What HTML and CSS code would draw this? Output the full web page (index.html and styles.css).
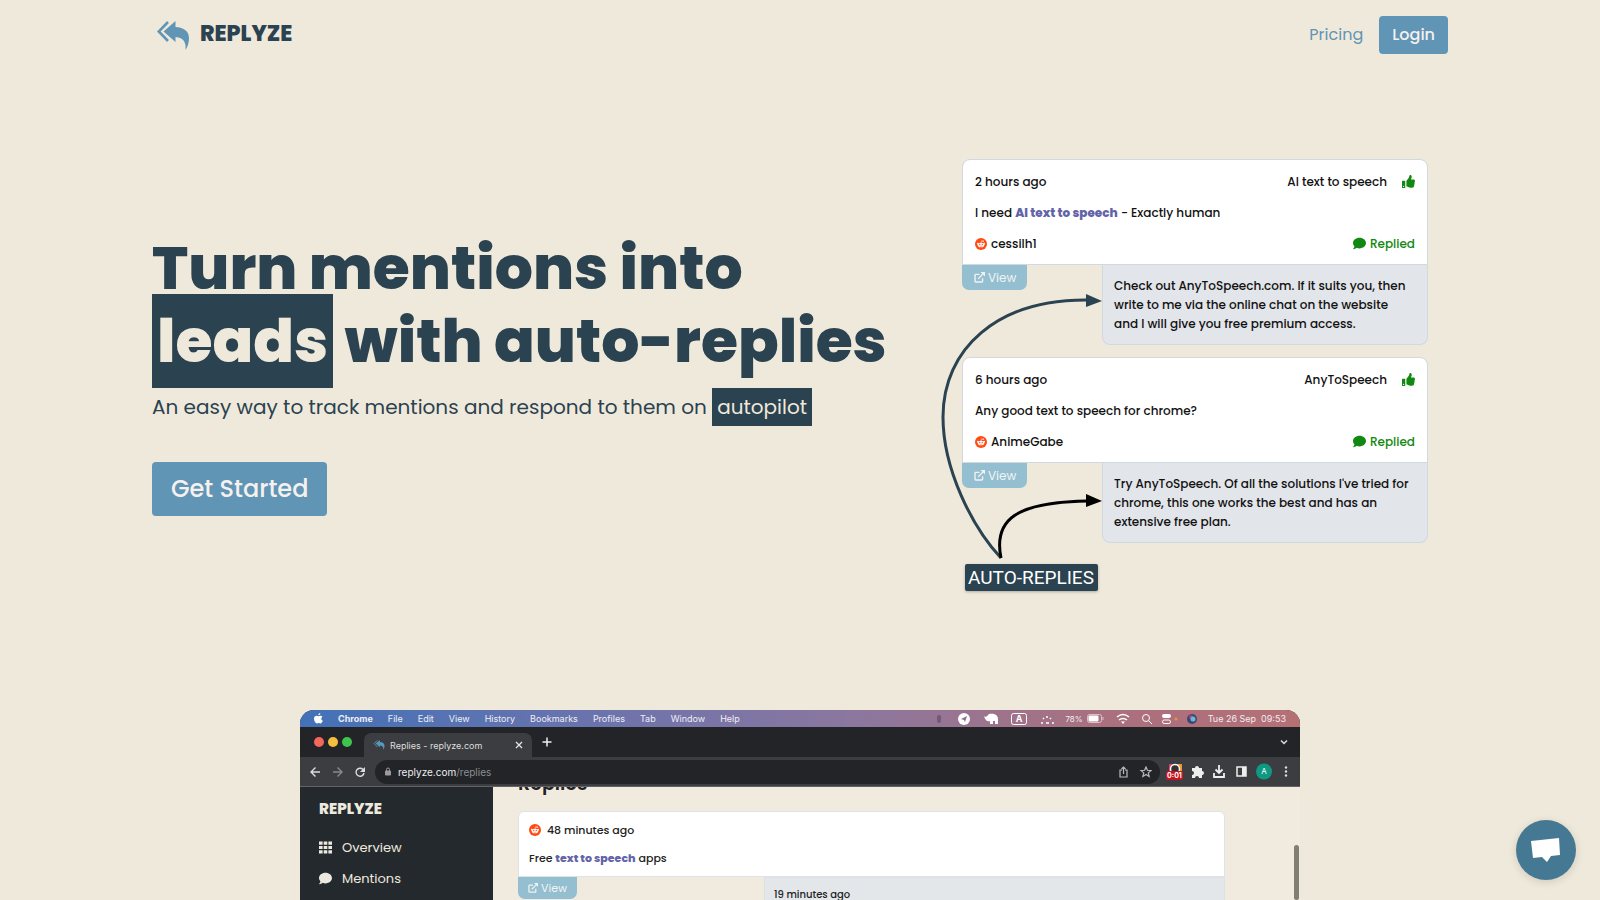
FILE: index.html
```html
<!DOCTYPE html>
<html lang="en">
<head>
<meta charset="utf-8">
<meta name="viewport" content="width=device-width, initial-scale=1">
<title>Replyze</title>
<link rel="stylesheet" href="styles.css">
</head>
<body>
<svg class="sprite" aria-hidden="true">
  <symbol id="logo" viewBox="0 0 32 29">
    <path d="M11 1 1.800 10.500 11 20" fill="none" stroke="currentColor" stroke-width="2.600"/>
    <path d="M18.500 0v6C27 6.500 32 10 32 17.500c0 4-1.500 8.500-3.500 11.500.8-7-1.500-12.500-10-13v5L6.500 10.500z" fill="currentColor"/>
  </symbol>
  <symbol id="thumb" viewBox="0 0 512 512"><path fill="currentColor" d="M104 224H24c-13 0-24 11-24 24v240c0 13 11 24 24 24h80c13 0 24-11 24-24V248c0-13-11-24-24-24zM64 472a24 24 0 1 1 0-48 24 24 0 0 1 0 48zM384 81c0 43-26 66-33 95h101c33 0 60 28 60 58 0 18-7 37-19 49 9 23 8 54-9 77 8 25 0 55-16 71 4 17 2 32-6 43-20 28-68 28-109 28h-3c-46 0-84-17-114-30-15-7-35-15-50-15-6 0-12-5-12-12V231c0-3 1-6 4-9 37-36 53-75 83-105 14-14 19-35 24-55C289 45 298 0 320 0c24 0 64 8 64 81z"/></symbol>
  <symbol id="comment" viewBox="0 0 512 448"><path fill="currentColor" d="M256 0C115 0 0 93 0 208c0 50 21 95 57 131-13 50-54 94-55 95-2 2-3 6-1 9s4 5 7 5c66 0 116-32 141-52 33 13 69 20 107 20 141 0 256-93 256-208S397 0 256 0z"/></symbol>
  <symbol id="external" viewBox="0 0 16 16"><path d="M8 3.500H2.500a1 1 0 0 0-1 1v9a1 1 0 0 0 1 1h9a1 1 0 0 0 1-1V9M6 10l7-7" fill="none" stroke="currentColor" stroke-width="2"/><path d="M9.500 0H16v6.500z" fill="currentColor"/></symbol>
  <symbol id="reddit" viewBox="0 0 24 24"><circle cx="12" cy="12" r="12" fill="#ff4a14"/><ellipse cx="12" cy="14" rx="6.500" ry="4.700" fill="#fff"/><circle cx="5.700" cy="11.500" r="1.800" fill="#fff"/><circle cx="18.300" cy="11.500" r="1.800" fill="#fff"/><path d="m12 10 1-4.500 3.500.8" stroke="#fff" fill="none"/><circle cx="16.500" cy="6.300" r="1.400" fill="#fff"/><circle cx="9.500" cy="13" r="1.300" fill="#ff4a14"/><circle cx="14.500" cy="13" r="1.300" fill="#ff4a14"/><path d="M9.500 16q2.500 1.500 5 0" stroke="#ff4a14" fill="none"/></symbol>
</svg>

<header class="header wrap">
  <a class="brand" href="#"><svg class="brand-icon"><use href="#logo"/></svg><span class="brand-name">REPLYZE</span></a>
  <nav class="nav"><a class="nav-link" href="#">Pricing</a><a class="btn" href="#">Login</a></nav>
</header>

<main class="main">
  <section class="hero wrap">
    <div class="pitch">
      <h1 class="title">Turn mentions into<br><span class="mark">leads</span> with auto-replies</h1>
      <p class="subtitle">An easy way to track mentions and respond to them on <span class="mark-small">autopilot</span></p>
      <a class="btn btn-large" href="#">Get Started</a>
    </div>

    <div class="demo">
      <article class="thread">
        <div class="card">
          <div class="row"><span>2 hours ago</span><span class="topic">AI text to speech <svg class="i13 green"><use href="#thumb"/></svg></span></div>
          <div class="row"><span>I need <b class="keyword">AI text to speech</b> - Exactly human</span></div>
          <div class="row"><span class="user"><svg class="i12"><use href="#reddit"/></svg>cessilh1</span><span class="user green"><svg class="i13"><use href="#comment"/></svg>Replied</span></div>
        </div>
        <div class="below">
          <a class="view" href="#"><svg class="i11"><use href="#external"/></svg>View</a>
          <p class="reply">Check out AnyToSpeech.com. If it suits you, then<br>write to me via the online chat on the website<br>and I will give you free premium access.</p>
        </div>
      </article>
      <article class="thread">
        <div class="card">
          <div class="row"><span>6 hours ago</span><span class="topic">AnyToSpeech <svg class="i13 green"><use href="#thumb"/></svg></span></div>
          <div class="row"><span>Any good text to speech for chrome?</span></div>
          <div class="row"><span class="user"><svg class="i12"><use href="#reddit"/></svg>AnimeGabe</span><span class="user green"><svg class="i13"><use href="#comment"/></svg>Replied</span></div>
        </div>
        <div class="below">
          <a class="view" href="#"><svg class="i11"><use href="#external"/></svg>View</a>
          <p class="reply">Try AnyToSpeech. Of all the solutions I've tried for<br>chrome, this one works the best and has an<br>extensive free plan.</p>
        </div>
      </article>
      <span class="auto">AUTO-REPLIES</span>
      <svg class="arrows" viewBox="0 0 496 432" aria-hidden="true">
        <path d="M69 399C40 368 11 310 11 258 11 190 65 140 156 141" fill="none" stroke="#2b4250" stroke-width="3"/>
        <path d="M154 135v13l16-6z" fill="#2b4250"/>
        <path d="M69 399C61 360 85 343 156 342" fill="none" stroke="#000" stroke-width="3"/>
        <path d="M154 335v13l16-6z" fill="#000"/>
      </svg>
    </div>
  </section>

  <section class="video">
    <div class="menubar">
      <svg class="apple" viewBox="0 0 20 24"><path fill="#fff" d="M14 0c0 3-2 5-4.500 5C9.300 2.500 11.500.3 14 0zM10 7c1 0 2.500-1.200 4.500-1.200 1.700 0 3.300.8 4.300 2.200-4 2.400-3.300 7.700.7 9.200C18.500 20 16.500 23 14.500 23c-1.500 0-2.200-1-4-1s-2.600 1-4 1C3.500 23 0 17 0 12.500 0 8 3 6 5.500 6 7.500 6 9 7 10 7z"/></svg>
      <b>Chrome</b><span>File</span><span>Edit</span><span>View</span><span>History</span><span>Bookmarks</span><span>Profiles</span><span>Tab</span><span>Window</span><span>Help</span>
      <div class="status">
        <svg class="status-icons" viewBox="0 0 126 14" fill="none" stroke="#fff">
          <rect x="1" y="3" width="4" height="8" rx="2" fill="#735976" stroke="none"/>
          <circle cx="28" cy="7" r="6" fill="#fff" stroke="none"/><path d="m25 7 6-3-2 6-1-2z" fill="#8a6e93" stroke="none"/>
          <path d="M48 4c2 2 3 0 5-2 4-1 9 0 9 5v5h-3V9h-2v3h-3V9c-3 1-5-1-6-5z" fill="#fff" stroke="none"/>
          <rect x="75.500" y="1.500" width="15" height="11" rx="2"/>
          <text x="83" y="10" text-anchor="middle" class="key">A</text>
          <path d="M105 11h2m3 0h3m3 0h2M107 6l1 1m3-3v2m4 0-1 1" stroke-width="1.500"/>
        </svg>
        <small class="percent">78%</small>
        <svg class="battery" viewBox="0 0 17 9"><rect x=".5" y=".5" width="14" height="8" rx="2" fill="none" stroke="#e0bfca"/><rect x="1.500" y="1.500" width="10" height="6" rx="1" fill="#fff"/><path d="M16 3v3" stroke="#e0bfca"/></svg>
        <svg class="tools" viewBox="0 0 84 14" fill="none" stroke="#fff" stroke-width="1.500">
          <path d="M1 5q6-5 12 0M3 8q4-3 8 0"/><path d="M5 9.500h4L7 12z" fill="#fff" stroke="none"/>
          <circle cx="30" cy="6" r="3.500" stroke-width="1"/><path d="m33 9 3 3" stroke-width="1"/>
          <rect x="46" y="2" width="9" height="4" rx="2" fill="#fff" stroke="none"/><rect x="46.500" y="8" width="8" height="3.500" rx="1.700" stroke-width="1"/>
          <circle cx="60" cy="7" r="1.500" fill="#ee913d" stroke="none"/>
          <circle cx="76" cy="7" r="5" fill="#3a4774" stroke="none"/><circle cx="75" cy="5" r="2" fill="#b83c78" stroke="none"/><circle cx="77" cy="7" r="2.500" fill="#62bdd1" stroke="none"/>
        </svg>
        <span>Tue 26 Sep&nbsp; 09:53</span>
      </div>
    </div>
    <div class="tabs">
      <i class="dot red"></i><i class="dot yellow"></i><i class="dot lime"></i>
      <div class="tab"><svg class="tab-icon"><use href="#logo"/></svg><span class="tab-name">Replies - replyze.com</span><svg class="tab-close" viewBox="0 0 8 8"><path d="m1 1 6 6M7 1 1 7" stroke="#e5e5e5" stroke-width="1.300"/></svg></div>
      <svg class="i10" viewBox="0 0 10 10"><path d="M5 .5v9M.5 5h9" stroke="#eee" stroke-width="1.500"/></svg>
      <svg class="chevron" viewBox="0 0 8 8"><path d="m1 2.500 3 3 3-3" fill="none" stroke="#ddd" stroke-width="1.500"/></svg>
    </div>
    <div class="toolbar">
      <svg class="nav-icons" viewBox="0 0 56 12" fill="none" stroke="#ddd" stroke-width="1.400">
        <path d="M10 6H1m4.500-4.500L1 6l4.500 4.500"/><path d="M23 6h9m-4.500-4.500L32 6l-4.500 4.500" stroke="#88898c"/><path d="M53 3.500A4 4 0 1 0 54 7"/><path d="M55 1v5h-5z" fill="#ddd" stroke="none"/>
      </svg>
      <div class="address">
        <svg class="lock" viewBox="0 0 8 9"><rect x="1" y="3.500" width="6" height="5" rx="1" fill="#9b9c9f"/><path d="M2.500 4V2.500a1.500 1.500 0 0 1 3 0V4" fill="none" stroke="#9b9c9f"/></svg>
        <span class="url">replyze.com<span class="path">/replies</span></span>
        <svg class="share" viewBox="0 0 34 12" fill="none" stroke="#bbb" stroke-width="1.200"><path d="M4 4H2v7h7V4H7M5.500 8V1M3.500 3l2-2 2 2"/><path d="m28 1 1.400 3.300 3.600.3-2.700 2.300.8 3.500L28 8.500l-3.100 1.900.8-3.500L23 4.600l3.600-.3z"/></svg>
      </div>
      <svg class="extensions" viewBox="0 0 126 18">
        <rect x="4" y="1" width="11" height="8" fill="#e23a6c"/><path d="M10 1h7v7h-7z" fill="#e99a35"/><circle cx="10" cy="6" r="4.500" fill="#333" stroke="#fff" stroke-width="1.500"/><rect x="1" y="8" width="17" height="9" rx="2" fill="#c8141f"/><text x="9.500" y="15" text-anchor="middle" class="timer">0:01</text>
        <path d="M27 5h3a2 2 0 1 1 4 0h3v3a2 2 0 1 1 0 4v3h-3a2 2 0 0 0-4 0h-3v-3a2 2 0 0 0 0-4z" fill="#eee"/>
        <path d="M54 2v8m-3.500-3.500L54 10l3.500-3.500M49 10v4h10v-4" fill="none" stroke="#eee" stroke-width="1.800"/>
        <rect x="72" y="4" width="9" height="9" fill="none" stroke="#eee" stroke-width="1.500"/><path d="M77 4h4v9h-4z" fill="#eee"/>
        <circle cx="99" cy="8.500" r="8" fill="#109982"/><text x="99" y="11" text-anchor="middle" class="avatar">A</text>
        <circle cx="121" cy="4.500" r="1.200" fill="#ddd"/><circle cx="121" cy="8.500" r="1.200" fill="#ddd"/><circle cx="121" cy="12.500" r="1.200" fill="#ddd"/>
      </svg>
    </div>
    <div class="app">
      <aside class="sidebar">
        <strong class="side-brand">REPLYZE</strong>
        <a class="side-link" href="#"><svg class="i13" viewBox="0 0 13 12" fill="#eee9df"><path d="M0 0h3.600v3.200H0zM4.700 0h3.600v3.200H4.700zM9.400 0H13v3.200H9.400zM0 4.400h3.600v3.200H0zM4.700 4.400h3.600v3.200H4.700zM9.400 4.400H13v3.200H9.400zM0 8.800h3.600V12H0zM4.700 8.800h3.600V12H4.700zM9.400 8.800H13V12H9.400z"/></svg>Overview</a>
        <a class="side-link" href="#"><svg class="i13"><use href="#comment"/></svg>Mentions</a>
      </aside>
      <div class="content">
        <h2 class="page-title">Replies</h2>
        <div class="feed-card">
          <div class="feed-row"><svg class="i12"><use href="#reddit"/></svg>48 minutes ago</div>
          <div>Free <b class="keyword">text to speech</b> apps</div>
        </div>
        <div class="feed-below"><a class="view view-small" href="#"><svg class="i10"><use href="#external"/></svg>View</a><div class="feed-reply">19 minutes ago</div></div>
      </div>
      <i class="thumb-bar"></i>
    </div>
  </section>
</main>

<button class="chat" aria-label="Open chat"><svg class="chat-icon" viewBox="0 0 30 25"><path d="M0 3 28 0l1 17-9 1-4 6-5-5-9 1z" fill="#fff"/></svg></button>
</body>
</html>
```
FILE: styles.css
```css
* { box-sizing: border-box; }
body {
  margin: 0;
  height: 100vh;
  overflow: hidden;
  display: flex;
  flex-direction: column;
  background: #efe9db;
  color: #2b4250;
  font-family: Poppins, Inter, "Open Sans", sans-serif;
  font-size: 16px;
}
a { color: inherit; text-decoration: none; }
h1, h2, p { margin: 0; }
svg { flex: none; display: block; }
.sprite { position: absolute; width: 0; height: 0; }
.wrap { width: 100%; max-width: 1320px; margin: 0 auto; padding: 0 12px; }
.i10 { width: 10px; height: 10px; }
.i11 { width: 11px; height: 11px; }
.i12 { width: 12px; height: 12px; }
.i13 { width: 13px; height: 13px; }
.green { color: #118811; }

.header { display: flex; justify-content: space-between; align-items: center; height: 70px; flex: none; }
.brand { display: flex; align-items: center; gap: 11px; padding-left: 5px; font-size: 22px; font-weight: 800; }
.brand-name { padding-bottom: 3px; }
.brand-icon { width: 32px; height: 29px; color: #6195b5; }
.nav { display: flex; align-items: center; gap: 16px; }
.nav-link { padding-bottom: 2px; color: #6195b5; }
.btn { display: inline-block; padding: 7px 13px; line-height: 24px; border-radius: 4px; background: #6195b5; color: #f5f1ef; font-weight: 500; }
.btn-large { padding: 9px 19px; font-size: 24px; line-height: 36px; }

.main { flex: 1; min-height: 0; display: flex; flex-direction: column; }
.hero { display: flex; justify-content: space-between; align-items: center; padding-top: 89px; padding-bottom: 119px; flex: none; }
.pitch { padding-bottom: 3px; }
.title { font-size: 60px; line-height: 73px; font-weight: 800; white-space: nowrap; }
.mark { background: #2b4250; color: #efe9db; padding: 5px; }
.subtitle { margin: 14px 0 40px; font-size: 20px; line-height: 30px; }
.mark-small { background: #2b4250; color: #efe9db; padding: 5px; }

.demo { position: relative; flex: none; width: 496px; margin-right: 20px; padding-left: 30px; color: #111; font-size: 12px; font-weight: 500; }
.thread { margin-bottom: 12px; }
.card { border: 1px solid #d0d8e0; border-radius: 8px 8px 0 0; background: #fff; padding: 6px 12px 5px; }
.row { display: flex; justify-content: space-between; align-items: center; height: 31px; }
.topic { display: flex; align-items: center; gap: 15px; }
.user { display: flex; align-items: center; gap: 4px; }
.keyword { color: #6264a7; font-weight: 800; }
.below { display: flex; justify-content: space-between; align-items: flex-start; }
.view { display: flex; align-items: center; gap: 3px; height: 25px; padding: 0 11px 0 12px; border-radius: 0 0 7px 7px; background: #94bfd0; color: #f1f3f3; font-size: 12px; font-weight: 400; }
.reply { width: 326px; padding: 11px; border: 1px solid #d0d8e0; border-top: 0; border-radius: 0 0 8px 8px; background: #e2e5e9; line-height: 19px; white-space: nowrap; }
.auto { display: block; width: 133px; margin: 21px 0 0 3px; padding: 0 3px; border-radius: 2px; background: #2b4250; color: #fff; font: 19px/27px Roboto, sans-serif; box-shadow: 0 1px 3px #0004; }
.arrows { position: absolute; left: 0; top: 0; width: 496px; height: 432px; }

.video { flex: 1; min-height: 0; display: flex; flex-direction: column; width: 100%; max-width: 1000px; margin: 0 auto; overflow: hidden; border-radius: 14px 14px 0 0; background: #222428; font-size: 11px; font-weight: 500; }
.menubar, .tabs, .toolbar { font-family: Inter, sans-serif; font-weight: 400; }
.menubar { display: flex; flex: none; align-items: center; gap: 15px; height: 17px; padding: 0 14px; background: linear-gradient(90deg, #4272b8, #6c73ac 30%, #8b779f 55%, #a9707f 80%, #b57075); color: #f0eef4; font-size: 9px; white-space: nowrap; }
.apple { width: 9px; height: 11px; }
.status { display: flex; align-items: center; margin-left: auto; }
.status-icons { width: 126px; height: 14px; }
.percent { font-size: 8px; margin-left: 3px; }
.battery { width: 17px; height: 9px; margin: 0 12px 0 4px; }
.tools { width: 84px; height: 14px; margin-right: 8px; }
.key { font-size: 9px; fill: #fff; stroke: none; font-weight: 700; }
.timer { font-size: 7px; fill: #fff; font-weight: 700; }
.avatar { font-size: 8px; fill: #fff; }
.tabs { display: flex; flex: none; align-items: center; height: 30px; padding: 0 12px 0 14px; }
.dot { width: 10px; height: 10px; margin-right: 4px; border-radius: 50%; }
.red { background: #f4685b; }
.yellow { background: #f5bd40; }
.lime { background: #3ec54c; }
.tab { display: flex; align-items: center; align-self: flex-end; width: 168px; height: 24px; margin: 0 10px 0 8px; padding: 0 9px; border-radius: 7px 7px 0 0; background: #3c3d41; color: #dedede; font-size: 9px; }
.tab-icon { width: 12px; height: 10px; margin-right: 5px; color: #5798bc; }
.tab-name { flex: 1; white-space: nowrap; }
.tab-close { width: 8px; height: 8px; }
.chevron { width: 8px; height: 8px; margin-left: auto; }
.toolbar { display: flex; flex: none; align-items: center; height: 30px; padding: 0 9px 0 10px; background: #3c3d41; border-bottom: 1px solid #636365; }
.nav-icons { width: 56px; height: 12px; }
.address { display: flex; flex: 1; align-items: center; height: 24px; margin: 0 5px 0 9px; padding: 0 8px 0 9px; border-radius: 12px; background: #222428; color: #eee; }
.lock { width: 8px; height: 9px; margin-right: 6px; }
.url { flex: 1; font-size: 10px; }
.path { color: #8d8e91; }
.share { width: 34px; height: 12px; }
.extensions { width: 126px; height: 18px; }
.app { display: flex; flex: 1; min-height: 0; overflow: hidden; background: #f0eadf; }
.sidebar { flex: none; width: 193px; padding: 9px 19px; background: #24292e; color: #eee9df; }
.side-brand { display: block; margin-bottom: 10px; font-size: 15px; line-height: 26px; font-weight: 800; }
.side-link { display: flex; align-items: center; gap: 10px; height: 31px; font-size: 13px; font-weight: 400; }
.content { flex: 1; padding: 0 69px 0 25px; color: #222; }
.page-title { margin-top: -17px; font-size: 19px; line-height: 27px; font-weight: 600; }
.feed-card { height: 66px; margin-top: 14px; padding: 8px 10px; border: 1px solid #dfe3e5; border-radius: 6px 6px 0 0; background: #fff; line-height: 20px; }
.feed-row { display: flex; align-items: center; gap: 6px; margin-bottom: 8px; }
.feed-below { display: flex; justify-content: space-between; align-items: flex-start; }
.view-small { height: 22px; padding: 0 10px; font-size: 11px; }
.feed-reply { width: 461px; height: 200px; padding: 9px; border: 1px solid #dde1e5; background: #e4e7ea; font-size: 10px; line-height: 15px; }
.thumb-bar { width: 5px; margin: 58px 1px 0 0; border-radius: 3px; background: #807f72; }

.chat { position: fixed; right: 24px; bottom: 20px; display: grid; place-items: center; width: 60px; height: 60px; padding: 0; border: 0; border-radius: 50%; background: #457993; box-shadow: 0 2px 8px #0002; }
.chat-icon { width: 30px; height: 25px; }
```
